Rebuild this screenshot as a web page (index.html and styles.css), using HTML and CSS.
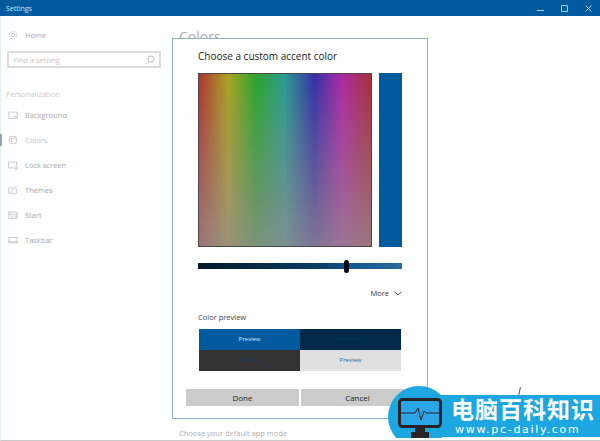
FILE: index.html
```html
<!DOCTYPE html>
<html lang="en">
  <head>
    <meta charset="UTF-8" />
    <title>Settings</title>
    <link rel="stylesheet" href="styles.css">
  </head>
  <body>
    <header class="titlebar">
      <span class="titlebar-name">Settings</span>
      <div class="window-buttons">
        <svg width="7" height="7" viewBox="0 0 7 7"><path d="M0 5.500h7" /></svg>
        <svg width="7" height="7" viewBox="0 0 7 7"><path d="M.5.5h6v6h-6z" /></svg>
        <svg width="7" height="7" viewBox="0 0 7 7"><path d="M.5.5l6 6M6.500.5l-6 6" /></svg>
      </div>
    </header>

    <div class="window">
      <nav class="sidebar">
        <div class="nav-item home">
          <svg viewBox="0 0 12 12"><circle cx="6" cy="6" r="2" /><circle cx="6" cy="6" r="4.400" stroke-dasharray="2 1.400" /></svg>
          <span>Home</span>
        </div>
        <div class="search">
          <span>Find a setting</span>
          <svg width="10" height="10" viewBox="0 0 10 10"><circle cx="6" cy="4" r="3" /><path d="M4 6.200L1 9.300" /></svg>
        </div>
        <div class="section-name">Personalization</div>
        <div class="nav-item">
          <svg viewBox="0 0 12 12"><path d="M1 2.500h10v7.500h-10z" /><path d="M6 10l2.500-3 2.500 3" /></svg>
          <span>Background</span>
        </div>
        <div class="nav-item active">
          <svg viewBox="0 0 12 12"><circle cx="6" cy="6" r="4.800" /><circle cx="4" cy="4.500" r=".7" /><circle cx="7.500" cy="4" r=".7" /><circle cx="4" cy="7.500" r=".7" /></svg>
          <span>Colors</span>
        </div>
        <div class="nav-item">
          <svg viewBox="0 0 12 12"><path d="M10.500 7v-4.500h-10v7h6" /><path d="M8 8h3v3h-3z" /></svg>
          <span>Lock screen</span>
        </div>
        <div class="nav-item">
          <svg viewBox="0 0 12 12"><path d="M10 4.500v5.500h-9v-6.500h5.500" /><path d="M3 8.500l7.500-7" /></svg>
          <span>Themes</span>
        </div>
        <div class="nav-item">
          <svg viewBox="0 0 12 12"><path d="M1 2.500h10v7.500h-10z" /><path d="M1 5h4v5M7 5h4M7 7.500h4" /></svg>
          <span>Start</span>
        </div>
        <div class="nav-item">
          <svg viewBox="0 0 12 12"><path d="M1 3h10v6.500h-10z" /><path d="M1 8h10" /></svg>
          <span>Taskbar</span>
        </div>
      </nav>
      <main class="content">
        <h1>Colors</h1>
        <p class="app-mode">Choose your default app mode</p>
      </main>
    </div>

    <section class="dialog">
      <h2>Choose a custom accent color</h2>
      <div class="picker">
        <div class="spectrum"></div>
        <div class="current"></div>
      </div>
      <div class="slider"><span class="thumb"></span></div>
      <div class="more">
        <span>More</span>
        <svg width="8" height="5" viewBox="0 0 8 5"><path d="M.5.500L4 4 7.500.500" /></svg>
      </div>
      <div class="preview-label">Color preview</div>
      <div class="preview">
        <div class="swatch accent">Preview</div>
        <div class="swatch dark-accent">Preview</div>
        <div class="swatch charcoal">Preview</div>
        <div class="swatch light">Preview</div>
      </div>
      <div class="actions">
        <button type="button">Done</button>
        <button type="button">Cancel</button>
      </div>
    </section>

    <span class="stray-mark"></span>

    <div class="watermark">
      <div class="badge">
        <svg width="44" height="40" viewBox="0 0 44 40">
          <rect x="1.500" y="1.500" width="41" height="27" rx="3" class="screen" />
          <path d="M3 15h14l3-5 3 12 3-9 2 2h13" class="pulse" />
          <path d="M17 30h10v4h-10z" class="stand" />
          <path d="M13 34h18v6h-18z" class="stand" />
        </svg>
      </div>
      <div class="brand">
        <div class="brand-name">电脑百科知识</div>
        <div class="brand-url">www.pc-daily.com</div>
      </div>
    </div>
  </body>
</html>
```

FILE: styles.css
```css
* {
  box-sizing: border-box;
}

html,
body {
  height: 100%;
}

body {
  margin: 0;
  overflow: hidden;
  display: flex;
  flex-direction: column;
  background: #fff;
  font-family: "Open Sans", "Liberation Sans", sans-serif;
}

.titlebar {
  height: 16px;
  flex: none;
  display: flex;
  align-items: center;
  justify-content: space-between;
  padding: 0 0 0 6px;
  background: #005a9e;
  color: #d5e6f3;
  font-size: 7px;
}

.window-buttons {
  display: flex;
  gap: 17px;
  padding-right: 8px;
}

.window-buttons svg {
  fill: none;
  stroke: #a9cbe3;
}

.window {
  flex: 1;
  display: flex;
  min-height: 0;
  border-bottom: 1px solid #c9c9c9;
  border-left: 1px solid #e3eef2;
}

.sidebar {
  width: 171px;
  flex: none;
  padding-top: 9px;
  color: #a9a9a9;
  font-size: 7.500px;
}

.nav-item {
  height: 25px;
  display: flex;
  align-items: center;
  gap: 7px;
  padding-left: 7px;
}

.nav-item svg,
.search svg {
  fill: none;
  stroke: #b0b0b0;
  stroke-width: 0.8;
}

.nav-item svg {
  width: 10px;
  height: 10px;
}

.nav-item.home {
  height: 20px;
  margin-bottom: 6px;
}

.nav-item.active {
  margin-left: -1px;
  padding-left: 8px;
  background: linear-gradient(#8fa6b5, #8fa6b5) left center / 2px 12px no-repeat;
  color: #b6cad8;
}

.search {
  height: 17px;
  margin-left: 6px;
  width: 154px;
  display: flex;
  align-items: center;
  justify-content: space-between;
  padding: 0 4px;
  border: 2px solid #dcdcdc;
  color: #c5c5c5;
}

.section-name {
  margin: 21px 0 3px 5px;
  color: #c9c9c9;
}

.content {
  flex: 1;
  padding-left: 7px;
  display: flex;
  flex-direction: column;
  justify-content: space-between;
}

.content h1 {
  margin: 11px 0 0;
  color: #adadad;
  font-size: 14px;
  font-weight: 400;
}

.app-mode {
  margin: 0 0 2px;
  color: #b0b0b0;
  font-size: 7.500px;
}

.dialog {
  position: absolute;
  left: 172px;
  top: 38px;
  width: 256px;
  height: 381px;
  padding: 10px 12px 0 25px;
  background: #fff;
  border: 1px solid #8fb0c4;
  color: #222;
}

.dialog h2 {
  margin: 0;
  height: 24px;
  font-size: 10px;
  font-weight: 400;
  line-height: 14px;
}

.picker {
  display: flex;
  gap: 7px;
}

.spectrum {
  width: 174px;
  height: 174px;
  border: 1px solid #4d4448;
  background:
    linear-gradient(to bottom, rgba(150, 150, 150, 0) 0%, rgba(150, 140, 145, .75) 100%),
    linear-gradient(to right, #b0342e 0%, #a9a422 17%, #2ba52c 33%, #2a9b92 50%, #3530a6 67%, #ac2aa4 83%, #a92f3a 100%);
}

.current {
  width: 23px;
  height: 174px;
  background: #005a9e;
}

.slider {
  position: relative;
  height: 6px;
  margin-top: 16px;
  width: 204px;
  background: linear-gradient(to right, #03182a 0%, #0a3e66 60%, #105490 74%, #2a6c9e 100%);
}

.thumb {
  position: absolute;
  left: 146px;
  top: -3px;
  width: 5px;
  height: 13px;
  border-radius: 3px;
  background: #06090d;
}

.more {
  display: flex;
  align-items: center;
  justify-content: flex-end;
  gap: 5px;
  width: 204px;
  height: 12px;
  margin-top: 18px;
  font-size: 7.500px;
  color: #333;
}

.more svg {
  fill: none;
  stroke: #555;
}

.preview-label {
  margin-top: 13px;
  height: 17px;
  font-size: 7.500px;
  line-height: 11px;
  color: #444;
}

.preview {
  display: grid;
  grid-template-columns: 101px 101px;
  grid-auto-rows: 21px;
  width: 202px;
  margin-left: 1px;
  font-size: 6px;
  text-align: center;
  line-height: 21px;
}

.accent {
  background: #005a9e;
  color: #d9e9f5;
}

.dark-accent {
  background: #012a4a;
  color: #0d3e63;
}

.charcoal {
  background: #333;
  color: #1d4260;
}

.light {
  background: #e0e0e0;
  color: #2a6a9c;
}

.actions {
  display: flex;
  gap: 2px;
  margin: 18px 0 0 -12px;
}

.actions button {
  width: 113px;
  height: 17px;
  padding: 0;
  border: 0;
  background: #ccc;
  color: #222;
  font: 8px "Open Sans", "Liberation Sans", sans-serif;
}

.stray-mark {
  position: absolute;
  left: 519px;
  top: 387px;
  width: 1px;
  height: 9px;
  background: #555;
  transform: rotate(12deg);
}

.watermark {
  position: absolute;
  left: 388px;
  top: 386px;
  right: 0;
  height: 52px;
  overflow: hidden;
}

.badge {
  position: absolute;
  left: 0;
  top: 0;
  z-index: 1;
  width: 62px;
  height: 62px;
  border-radius: 50%;
  padding: 12px 0 0 10px;
  background: #1da7e0;
}

.badge svg {
  display: block;
}

.screen {
  fill: #2aa5e8;
  stroke: #2a2326;
  stroke-width: 3;
}

.pulse {
  fill: none;
  stroke: #2a2326;
  stroke-width: 1;
}

.stand {
  fill: #2a2326;
}

.brand {
  position: absolute;
  left: 40px;
  right: 0;
  top: 9px;
  height: 42px;
  padding: 3px 0 0 23px;
  background: #1da7e0;
  color: #fff;
  font-family: "Liberation Sans", "Noto Sans CJK SC", sans-serif;
  font-weight: 700;
  white-space: nowrap;
}

.brand-name {
  font-size: 23px;
  letter-spacing: 1px;
  line-height: 25px;
}

.brand-url {
  padding-left: 4px;
  font-family: "DejaVu Sans", sans-serif;
  font-size: 11px;
  font-weight: 400;
  letter-spacing: 1.700px;
  line-height: 13px;
}
```
